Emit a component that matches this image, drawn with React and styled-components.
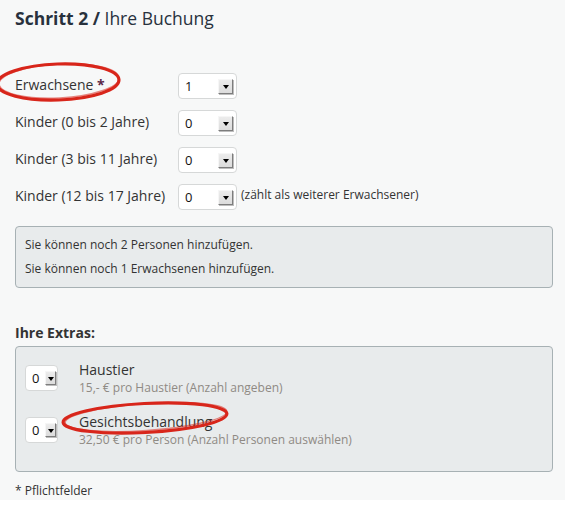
import React from 'react';
import styled, { createGlobalStyle } from 'styled-components';

const Global = createGlobalStyle`
  html, body { margin: 0; padding: 0; background: #ffffff; }
  body { font-family: "Open Sans", "Liberation Sans", sans-serif; color: #333; }
`;

const Page = styled.div`
  position: relative;
  width: 565px;
  min-height: 497px;
  box-sizing: border-box;
  background: #f7f8f8;
  padding: 6px 12px 0 15px;
`;

const Title = styled.h2`
  margin: 0;
  font-size: 17.5px;
  line-height: 24px;
  font-weight: 400;
  color: #28313d;
  strong { font-weight: 700; }
`;

const Form = styled.div`
  margin-top: 43px;
  display: flex;
  flex-direction: column;
  gap: 11px;
`;

const Row = styled.div`
  display: grid;
  grid-template-columns: 163px auto 1fr;
  align-items: center;
  height: 26px;
`;

const Label = styled.label`
  font-size: 14px;
  line-height: 20px;
  color: #333;
  margin-top: -2px;
`;

const Required = styled.span`
  color: #5b2747;
  font-weight: 700;
`;

const Note = styled.span`
  font-size: 12px;
  line-height: 18px;
  color: #333;
  margin: -4px 0 0 4px;
`;

const SelectBox = styled.div`
  width: ${p => (p.$small ? 33 : 59)}px;
  height: 26px;
  box-sizing: border-box;
  background: #fff;
  border: 1px solid #d6d8d8;
  border-radius: 4px;
  display: flex;
  align-items: center;
  justify-content: space-between;
  padding: 0 ${p => (p.$small ? 1 : 3)}px 0 6px;
  flex-shrink: 0;
  margin-top: ${p => p.$offset || 0}px;
`;

const SelectValue = styled.span`
  font-size: 13px;
  line-height: 16px;
  color: #111;
`;

const ArrowButton = styled.span`
  width: ${p => (p.$small ? 11 : 15)}px;
  height: ${p => (p.$small ? 14 : 15)}px;
  box-sizing: border-box;
  background: linear-gradient(#ececec, #dcdcdc);
  border: 1px solid;
  border-color: #f6f6f6 #7d7d7d #7d7d7d #f6f6f6;
  box-shadow: 1px 1px 0 #bdbdbd;
  display: flex;
  align-items: center;
  justify-content: center;
  &::after {
    content: "";
    width: 0;
    height: 0;
    border-left: 3px solid transparent;
    border-right: 3px solid transparent;
    border-top: 4px solid #000;
    margin-top: 1px;
  }
`;

const Select = ({ value, small, offset }) => (
  <SelectBox $small={small} $offset={offset}>
    <SelectValue>{value}</SelectValue>
    <ArrowButton $small={small} />
  </SelectBox>
);

const InfoBox = styled.div`
  margin-top: 16px;
  background: #e8ebec;
  border: 1px solid #a7b1b4;
  border-radius: 4px;
  padding: 6px 9px;
  font-size: 12px;
  line-height: 24px;
  color: #333;
`;

const SectionHeading = styled.h3`
  margin: 35px 0 0;
  font-size: 14px;
  line-height: 20px;
  font-weight: 700;
  color: #333;
`;

const ExtrasBox = styled.div`
  margin-top: 3px;
  background: #e8ebec;
  border: 1px solid #a7b1b4;
  border-radius: 4px;
  padding: 14px 9px 22px;
  display: flex;
  flex-direction: column;
  gap: 16px;
`;

const ExtraItem = styled.div`
  display: flex;
  align-items: flex-start;
  gap: 21px;
`;

const ExtraText = styled.div`
  display: flex;
  flex-direction: column;
`;

const ExtraTitle = styled.span`
  font-size: 14px;
  line-height: 18px;
  color: #333;
`;

const ExtraSub = styled.span`
  font-size: 12px;
  line-height: 18px;
  color: #8f8a84;
`;

const Footer = styled.div`
  margin-top: 10px;
  font-size: 12px;
  line-height: 18px;
  color: #333;
`;

const Marks = styled.svg`
  position: absolute;
  left: 0;
  top: 0;
  width: 565px;
  height: 497px;
  pointer-events: none;
  overflow: visible;
`;

const rows = [
  { label: 'Erwachsene', required: true, value: '1' },
  { label: 'Kinder (0 bis 2 Jahre)', value: '0' },
  { label: 'Kinder (3 bis 11 Jahre)', value: '0' },
  { label: 'Kinder (12 bis 17 Jahre)', value: '0', note: '(zählt als weiterer Erwachsener)' },
];

const extras = [
  { title: 'Haustier', sub: '15,- € pro Haustier (Anzahl angeben)' },
  { title: 'Gesichtsbehandlung', sub: '32,50 € pro Person (Anzahl Personen auswählen)' },
];

export default function App() {
  return (
    <>
      <Global />
      <Page>
        <Title>
          <strong>Schritt 2 /</strong> Ihre Buchung
        </Title>
        <Form>
          {rows.map(r => (
            <Row key={r.label}>
              <Label>
                {r.label}
                {r.required && <Required> *</Required>}
              </Label>
              <Select value={r.value} />
              {r.note ? <Note>{r.note}</Note> : <span />}
            </Row>
          ))}
        </Form>
        <InfoBox>
          Sie können noch 2 Personen hinzufügen.
          <br />
          Sie können noch 1 Erwachsenen hinzufügen.
        </InfoBox>
        <SectionHeading>Ihre Extras:</SectionHeading>
        <ExtrasBox>
          {extras.map(e => (
            <ExtraItem key={e.title}>
              <Select value="0" small offset={4} />
              <ExtraText>
                <ExtraTitle>{e.title}</ExtraTitle>
                <ExtraSub>{e.sub}</ExtraSub>
              </ExtraText>
            </ExtraItem>
          ))}
        </ExtrasBox>
        <Footer>* Pflichtfelder</Footer>
        <Marks viewBox="0 0 565 497">
          <g fill="none" stroke="#d8261b" strokeLinecap="round">
            <ellipse cx="58" cy="82" rx="61" ry="18" transform="rotate(-2 58 82)" strokeWidth="3.2" />
            <ellipse cx="59" cy="81" rx="60" ry="17" transform="rotate(-3 59 81)" strokeWidth="1.4" opacity="0.55" />
            <ellipse cx="145" cy="418" rx="82" ry="14.5" transform="rotate(-3 145 418)" strokeWidth="3.2" />
            <ellipse cx="146" cy="417" rx="81" ry="13.5" transform="rotate(-4 146 417)" strokeWidth="1.4" opacity="0.55" />
          </g>
        </Marks>
      </Page>
    </>
  );
}
